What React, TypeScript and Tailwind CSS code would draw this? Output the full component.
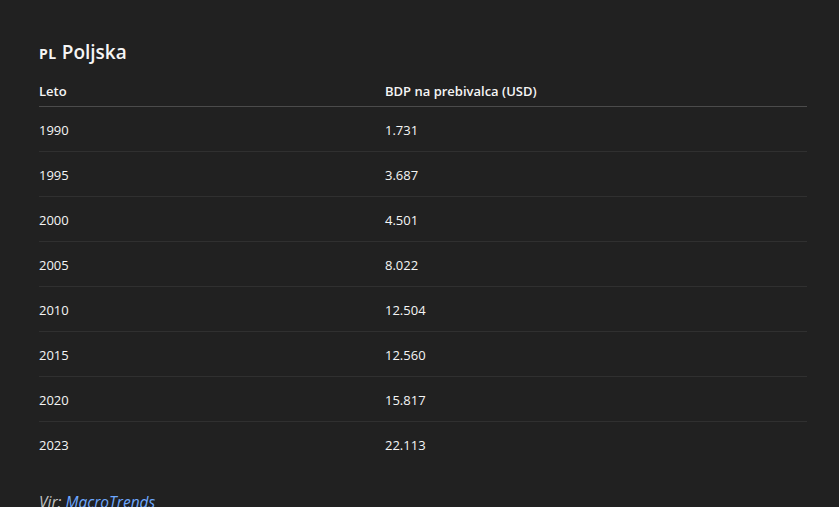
import React from 'react'

const rows = [
  { year: '1990', gdp: '1.731' },
  { year: '1995', gdp: '3.687' },
  { year: '2000', gdp: '4.501' },
  { year: '2005', gdp: '8.022' },
  { year: '2010', gdp: '12.504' },
  { year: '2015', gdp: '12.560' },
  { year: '2020', gdp: '15.817' },
  { year: '2023', gdp: '22.113' },
]

const App = () => {
  return (
    <div className="min-h-screen w-full bg-[#212121] text-[#f5f5f5] font-['Segoe_UI','Open_Sans',sans-serif]">
      <div className="px-[39px] pt-[38px] w-[846px]">
        <h2 className="flex items-baseline gap-[5px] text-[19px] leading-[28px] font-semibold">
          <span className="text-[14px] font-bold tracking-[0.5px]">PL</span>
          <span>Poljska</span>
        </h2>

        <table className="w-[768px] mt-[10px] border-collapse text-[13px]">
          <thead>
            <tr className="border-b border-[#4b4b4b]">
              <th className="w-[346px] text-left font-semibold pt-[4px] pb-[6px] leading-[18px]">Leto</th>
              <th className="text-left font-semibold pt-[4px] pb-[6px] leading-[18px]">BDP na prebivalca (USD)</th>
            </tr>
          </thead>
          <tbody>
            {rows.map((r, i) => (
              <tr key={r.year} className={i < rows.length - 1 ? 'border-b border-[#303030]' : ''}>
                <td className="pt-[14px] pb-[12px] leading-[18px]">{r.year}</td>
                <td className="pt-[14px] pb-[12px] leading-[18px]">{r.gdp}</td>
              </tr>
            ))}
          </tbody>
        </table>

        <p className="mt-[26px] italic text-[15.5px] leading-[20px] text-[#c4c4c4]">
          Vir: <a href="#" className="text-[#6ea8fe]">MacroTrends</a>
        </p>
      </div>
    </div>
  )
}

export default App
